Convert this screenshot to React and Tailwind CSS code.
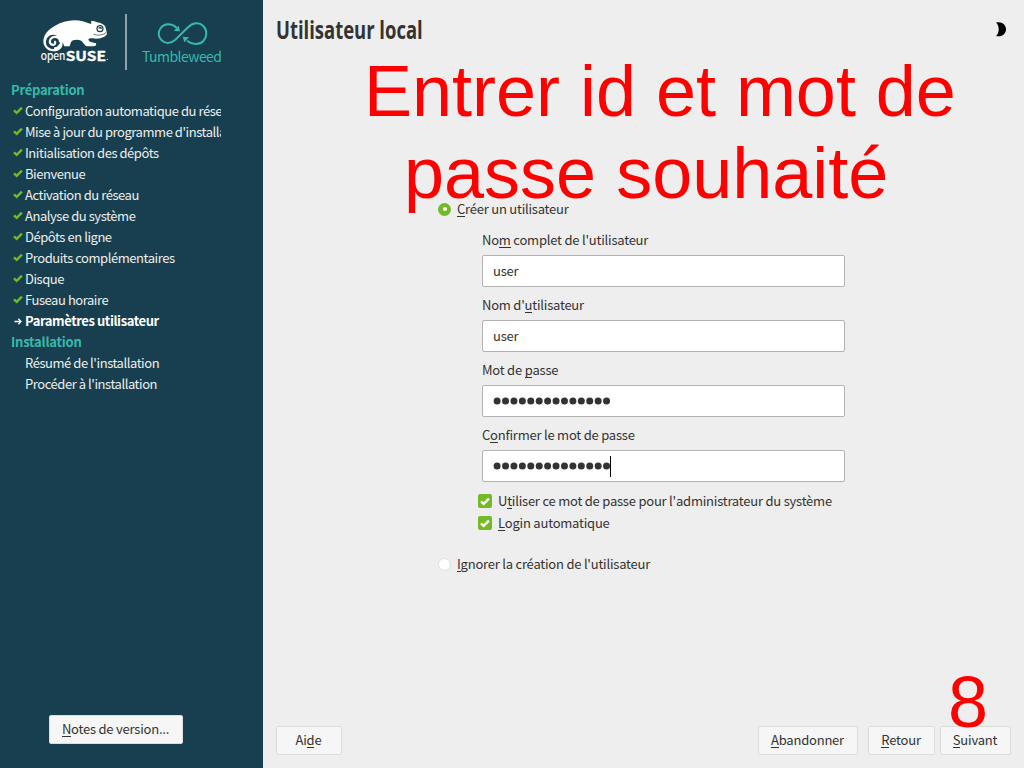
import React from "react";

const steps = [
  ["Configuration automatique du réseau", "done"],
  ["Mise à jour du programme d'installation", "done"],
  ["Initialisation des dépôts", "done"],
  ["Bienvenue", "done"],
  ["Activation du réseau", "done"],
  ["Analyse du système", "done"],
  ["Dépôts en ligne", "done"],
  ["Produits complémentaires", "done"],
  ["Disque", "done"],
  ["Fuseau horaire", "done"],
  ["Paramètres utilisateur", "current"],
];

const nextSteps = ["Résumé de l'installation", "Procéder à l'installation"];

// Splits the label around its keyboard accelerator, marked with "&".
function Label({ text }) {
  const i = text.indexOf("&");
  return (
    <span className="leading-[16px] tracking-[-0.22px] whitespace-pre">
      {text.slice(0, i)}
      <span className="inline-block h-[16px] border-b border-[#333]">{text[i + 1]}</span>
      {text.slice(i + 2)}
    </span>
  );
}

function Tick({ className, color, width }) {
  return (
    <svg viewBox="0 0 10 9" className={className} fill="none" stroke={color} strokeWidth={width}>
      <path d="M1 4.3 L3.7 6.9 L8.9 1.6" />
    </svg>
  );
}

function Chameleon() {
  return (
    <svg viewBox="0 0 300 210" className="h-[70px] w-[100px]">
      <path
        fill="#fff"
        d="M40 108 C41 90 54 74 74 63 C98 48 130 42 158 49 C168 51 177 56 184 57 L183 49 C190 46 196 49 201 52 C212 53 222 58 226 65 C228 73 230 80 231 87 C225 97 212 101 198 101 C190 101 184 99 181 100 C176 101 174 103 176 106 C180 113 190 113 198 115 C200 121 197 124 190 124 L170 124 C163 120 160 112 154 107 C145 103 134 104 126 107 C121 113 121 119 119 124 L103 124 L98 112 C99 131 86 140 70 139 C53 138 40 126 40 108 Z"
      />
      <circle cx="69" cy="111" r="21.5" fill="#173f4f" />
      <path
        d="M91 118 C86 127 79 131 72 130 M90 112 C92 97 78 93 68 97 C58 102 56 115 66 119 C75 121 79 113 73 108"
        fill="none"
        stroke="#fff"
        strokeWidth="6.5"
      />
      <circle cx="210" cy="71" r="9" fill="#fff" stroke="#173f4f" strokeWidth="3.5" />
      <path d="M206 70 Q211 66 215 71" fill="none" stroke="#173f4f" strokeWidth="4" />
      <path d="M190 88 Q214 95 229 82" fill="none" stroke="#173f4f" strokeWidth="2" />
      <text x="32" y="166" fill="#fff" stroke="#fff" strokeWidth="0.5" fontFamily="'Noto Sans CJK SC', sans-serif" fontSize="34" textLength="74" lengthAdjust="spacingAndGlyphs">
        open
      </text>
      <text x="107" y="167" fill="#fff" stroke="#fff" strokeWidth="1" fontWeight="700" fontFamily="'Noto Sans CJK SC', sans-serif" fontSize="39" textLength="121" lengthAdjust="spacingAndGlyphs">
        SUSE
      </text>
      <circle cx="232" cy="163" r="1.8" fill="#fff" />
    </svg>
  );
}

function Tumbleweed() {
  return (
    <svg viewBox="0 0 330 210" className="h-[70px] w-[110px]">
      <path d="M18 27 V195" stroke="#a9b8be" strokeWidth="5" />
      <path
        d="M170 68 C153 53 132 56 122 69 C113 81 114 96 125 106 C138 118 154 115 166 104 L204 67 C217 53 237 50 250 63 C263 77 261 96 250 108 C237 121 216 119 201 107"
        fill="none"
        stroke="#35b9ab"
        strokeWidth="6"
      />
      <path d="M180 79 L161 77 L176 62 Z M188 95 L207 97 L193 112 Z" fill="#35b9ab" />
      <text x="66" y="170" fill="#35b9ab" fontFamily="'Noto Sans CJK SC', sans-serif" fontSize="42" textLength="240" lengthAdjust="spacing">
        Tumbleweed
      </text>
    </svg>
  );
}

function Field({ label, children }) {
  return (
    <div className="flex h-[65px] flex-col">
      <div className="flex h-[23px] items-start">
        <Label text={label} />
      </div>
      <div className="flex h-8 w-[363px] items-center rounded-[2px] border border-[#b3b3b3] bg-white px-2.5 tracking-[-0.2px]">{children}</div>
    </div>
  );
}

function Dots({ caret }) {
  return (
    <div className="flex h-full items-center">
      <svg className="h-[10px] w-[117px]" fill="#333">
        {Array.from({ length: 14 }, (_, i) => (
          <circle key={i} cx={4.1 + i * 8.42} cy="5" r="3.5" />
        ))}
      </svg>
      {caret && <div className="h-[21px] w-px bg-black" />}
    </div>
  );
}

function Check({ label }) {
  return (
    <div className="flex h-[22px] items-center">
      <div className="mr-[6px] flex size-[14px] items-center justify-center rounded-[2px] bg-[#73ba25]">
        <Tick className="h-[9px] w-[10px]" color="#fff" width="2.4" />
      </div>
      <Label text={label} />
    </div>
  );
}

function Button({ label, className }) {
  return (
    <button className={"flex h-[29px] items-center justify-center rounded-[2px] border border-[#dcdcdc] bg-[#f6f6f6] pr-px pb-[2px] " + className}>
      <Label text={label} />
    </button>
  );
}

export default function App() {
  return (
    <div className="relative flex h-[768px] w-[1024px] overflow-hidden bg-[#eee] font-['Noto_Sans_CJK_SC','Noto_Sans',sans-serif] text-[13px] text-[#333]">
      <aside className="flex w-[263px] shrink-0 flex-col bg-[#173f4f]">
        <div className="flex h-[79px] pt-[5px] pl-[30px]">
          <Chameleon />
          <div className="-ml-[10px]">
            <Tumbleweed />
          </div>
        </div>
        <nav className="w-[221px] overflow-hidden pl-[11px] leading-[21px] tracking-[-0.45px] whitespace-nowrap text-[#eee]">
          <div className="h-[21px] font-bold tracking-[-0.25px] text-[#35b9ab]">Préparation</div>
          {steps.map(([name, state]) => (
            <div key={name} className="flex h-[21px] items-center">
              <span className="flex w-[14px] shrink-0 items-center pl-[2px]">
                {state === "done" ? (
                  <Tick className="h-[9px] w-[10px]" color="#73ba25" width="2.4" />
                ) : (
                  <svg viewBox="0 0 10 9" className="h-[9px] w-[10px] translate-y-px" fill="none" stroke="#fff" strokeWidth="1.3">
                    <path d="M1.5 4.5 H8 M5.3 1.8 L8 4.5 L5.3 7.2" />
                  </svg>
                )}
              </span>
              <span className={state === "current" ? "font-bold tracking-[-0.42px] text-white" : ""}>{name}</span>
            </div>
          ))}
          <div className="h-[21px] font-bold tracking-[-0.22px] text-[#35b9ab]">Installation</div>
          {nextSteps.map((name) => (
            <div key={name} className="h-[21px] pl-[14px]">
              {name}
            </div>
          ))}
        </nav>
        <div className="mt-auto mb-[24px] ml-[49px]">
          <Button label="&Notes de version..." className="w-[134px]" />
        </div>
      </aside>

      <main className="flex flex-1 flex-col pr-[13px] pl-[13px]">
        <header className="flex h-[60px] items-center justify-between">
          <h1 className="origin-left scale-x-[0.738] font-['Open_Sans',sans-serif] text-[25px] font-bold whitespace-nowrap">Utilisateur local</h1>
          <svg viewBox="0 0 16 16" className="mr-[4px] h-4 w-4 -translate-y-px">
            <path d="M5 1.6 C10.5 0.2 15 3.4 15 8.3 C15 13.2 10.5 16.4 5 15 C8.6 12 8.6 4.6 5 1.6 Z" fill="#000" />
          </svg>
        </header>

        <section className="flex flex-1 flex-col pt-[138px] pl-[162px]">
          <div className="flex h-[22px] items-center">
            <span className="mr-[6px] flex size-[13px] items-center justify-center rounded-full bg-[#73ba25]">
              <span className="size-[4px] rounded-full bg-white" />
            </span>
            <Label text="&Créer un utilisateur" />
          </div>
          <div className="flex flex-col pt-[12px] pl-[44px]">
            <Field label="No&m complet de l'utilisateur">user</Field>
            <Field label="Nom d'&utilisateur">user</Field>
            <Field label="Mot de &passe">
              <Dots />
            </Field>
            <Field label="C&onfirmer le mot de passe">
              <Dots caret />
            </Field>
          </div>
          <div className="-mt-[2px] ml-[40px] flex flex-col">
            <Check label="U&tiliser ce mot de passe pour l'administrateur du système" />
            <Check label="&Login automatique" />
          </div>
          <div className="mt-[19px] flex h-[22px] items-center">
            <span className="mr-[6px] size-[13px] rounded-full border border-[#dcdce8] bg-white" />
            <Label text="&Ignorer la création de l'utilisateur" />
          </div>
        </section>

        <footer className="mb-[13px] flex">
          <Button label="Ai&de" className="w-[66px]" />
          <Button label="&Abandonner" className="ml-auto w-[100px]" />
          <Button label="&Retour" className="ml-[10px] w-[67px]" />
          <Button label="&Suivant" className="ml-[5px] w-[71px]" />
        </footer>
      </main>

      <div className="pointer-events-none absolute top-[50px] left-[364px] w-[620px] font-['Liberation_Sans',sans-serif] text-[72px] leading-[82px] whitespace-nowrap text-[#ff0000]">
        <div className="tracking-[-0.02px]">Entrer id et mot de</div>
        <div className="pl-[40px]">passe souhaité</div>
      </div>
      <div className="pointer-events-none absolute top-[661px] left-[948px] font-['Liberation_Sans',sans-serif] text-[72px] leading-[82px] text-[#ff0000]">8</div>
    </div>
  );
}
